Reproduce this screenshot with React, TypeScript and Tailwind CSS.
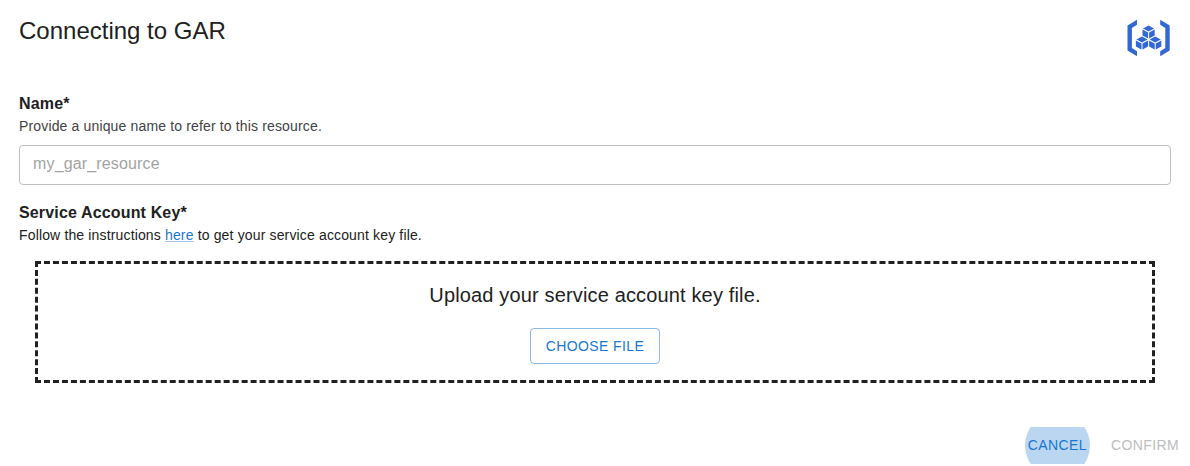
import React from "react";

function Cube({ x, y }: { x: number; y: number }) {
  return (
    <g transform={`translate(${x} ${y})`}>
      <path d="M0 -6.6L5.6 -3.6L0 -0.7L-5.600 -3.600Z" />
      <path d="M-6.100 -2.600L-0.500 0.400V6.400L-6.100 3.300Z" />
      <path d="M6.100 -2.600L0.500 0.400V6.400L6.100 3.300Z" />
    </g>
  );
}

function RegistryLogo() {
  return (
    <svg width="44" height="38" viewBox="0 0 44 38" fill="#3367d6" aria-hidden="true">
      <path d="M11 0.800L1.500 6.500V31.500L11 37.200V32.200L5.900 29.100V8.900L11 5.800Z" />
      <path d="M34.200 0.800L43.700 6.500V31.500L34.200 37.200V32.200L39.300 29.100V8.900L34.200 5.800Z" />
      <Cube x={22.6} y={13.1} />
      <Cube x={16} y={24.2} />
      <Cube x={29.2} y={24.2} />
    </svg>
  );
}

export default function App() {
  return (
    <main className="flex h-[466px] w-full flex-col overflow-hidden bg-white font-['Liberation_Sans',Arial,sans-serif] text-[#212121]">
      <header className="flex justify-between pt-[15px] pr-5 pl-[19px]">
        <h1 className="text-2xl leading-8">Connecting to GAR</h1>
        <div className="pt-1"><RegistryLogo /></div>
      </header>
      <section className="mt-[35px] px-[19px]">
        <label htmlFor="name" className="block text-base leading-6 font-bold tracking-[0.15px]">Name*</label>
        <p className="text-sm leading-5 tracking-[0.15px] text-[#424242]">Provide a unique name to refer to this resource.</p>
        <input
          id="name"
          placeholder="my_gar_resource"
          className="mt-[9px] block h-10 w-full rounded border border-[#c0c0c0] px-[13px] pb-[3px] text-base tracking-[0.15px] placeholder:text-[#a3a3a3]"
        />
      </section>
      <section className="mt-4 px-[19px]">
        <h2 className="text-base leading-6 font-bold tracking-[0.15px]">Service Account Key*</h2>
        <p className="text-sm leading-5 tracking-[0.15px]">
          Follow the instructions{" "}
          <a href="#" className="text-[#1976d2] underline decoration-[#1976d2]/40">here</a>{" "}
          to get your service account key file.
        </p>
        <div className="mx-4 mt-4 flex h-[122px] flex-col items-center border-[3px] border-dashed border-[#212121] pt-[15px]">
          <p className="text-xl leading-8 tracking-[0.15px]">Upload your service account key file.</p>
          <button className="mt-[17px] h-9 w-[130px] rounded border border-[#1976d2]/50 text-sm tracking-[0.4px] text-[#1976d2]">CHOOSE FILE</button>
        </div>
      </section>
      <footer className="mt-11 flex justify-end pr-[11px]">
        <button className="relative h-[37px] w-[76px] overflow-hidden pr-px pb-0.5 text-sm tracking-[0.4px] text-[#1976d2]">
          <span className="absolute top-[-14px] left-[5px] size-[65px] rounded-full bg-[#1976d2]/30" />
          <span className="relative">CANCEL</span>
        </button>
        <button className="ml-[15px] h-[37px] pb-0.5 text-sm tracking-[0.4px] text-[#bdbdbd]">CONFIRM</button>
      </footer>
    </main>
  );
}
